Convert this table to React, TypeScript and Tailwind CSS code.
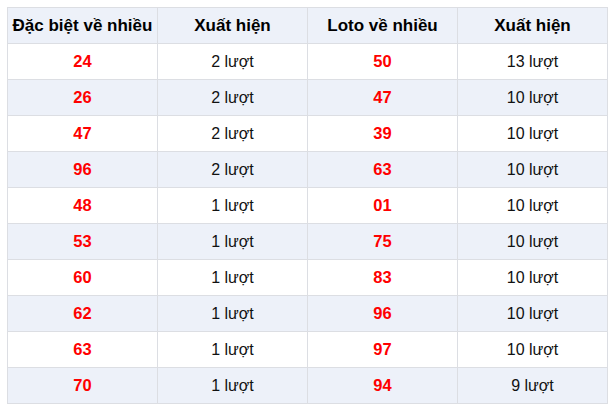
import React from "react";

const rows: [string, string, string, string][] = [
  ["24", "2 lượt", "50", "13 lượt"],
  ["26", "2 lượt", "47", "10 lượt"],
  ["47", "2 lượt", "39", "10 lượt"],
  ["96", "2 lượt", "63", "10 lượt"],
  ["48", "1 lượt", "01", "10 lượt"],
  ["53", "1 lượt", "75", "10 lượt"],
  ["60", "1 lượt", "83", "10 lượt"],
  ["62", "1 lượt", "96", "10 lượt"],
  ["63", "1 lượt", "97", "10 lượt"],
  ["70", "1 lượt", "94", "9 lượt"],
];

export default function App() {
  return (
    <div className="bg-white w-[615px] h-[411px] pt-[7px] pl-[7px] font-['Liberation_Sans',Arial,sans-serif] text-[16px] text-[#222]">
      <table className="border-collapse table-fixed w-[601px]">
        <colgroup>
          <col className="w-[150px]" />
          <col className="w-[150px]" />
          <col className="w-[150px]" />
          <col className="w-[150px]" />
        </colgroup>
        <thead>
          <tr className="bg-[#edf1f9] h-[36px]">
            {["Đặc biệt về nhiều", "Xuất hiện", "Loto về nhiều", "Xuất hiện"].map((h, i) => (
              <th key={i} className="border border-[#dcdee3] font-bold text-[17px] text-black text-center p-0 whitespace-nowrap">
                {h}
              </th>
            ))}
          </tr>
        </thead>
        <tbody>
          {rows.map((r, i) => (
            <tr key={i} className={`h-[36px] ${i % 2 === 1 ? "bg-[#edf1f9]" : "bg-white"}`}>
              <td className="border border-[#dcdee3] text-center p-0 font-bold text-[16.5px] text-[#ff0000]">{r[0]}</td>
              <td className="border border-[#dcdee3] text-center p-0 text-[#111]">{r[1]}</td>
              <td className="border border-[#dcdee3] text-center p-0 font-bold text-[16.5px] text-[#ff0000]">{r[2]}</td>
              <td className="border border-[#dcdee3] text-center p-0 text-[#111]">{r[3]}</td>
            </tr>
          ))}
        </tbody>
      </table>
    </div>
  );
}
